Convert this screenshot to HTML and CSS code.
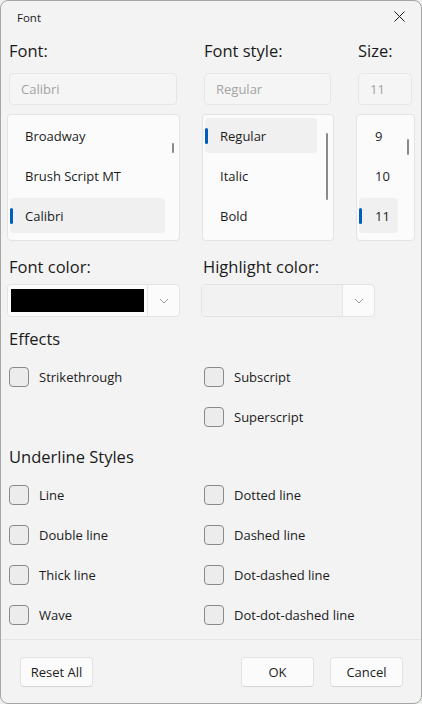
FILE: index.html
```html
<!DOCTYPE html>
<html>
<head>
<meta charset="utf-8">
<link rel="stylesheet" href="styles.css">
</head>
<body>
<div class="window">
  <div class="titlebar">
    <span class="title">Font</span>
    <svg class="close" width="11" height="11" viewBox="0 0 11 11"><path d="M0.5 0.5 L10.5 10.5 M10.5 0.5 L0.5 10.5" stroke="#1a1a1a" stroke-width="1" fill="none"/></svg>
  </div>

  <div class="top-grid">
    <div class="col">
      <div class="label">Font:</div>
      <div class="input">Calibri</div>
      <div class="list">
        <div class="item">Broadway</div>
        <div class="item">Brush Script MT</div>
        <div class="item selected">Calibri</div>
        <div class="scroll scroll-font"></div>
      </div>
    </div>
    <div class="col">
      <div class="label">Font style:</div>
      <div class="input">Regular</div>
      <div class="list">
        <div class="item item-style selected">Regular</div>
        <div class="item item-style">Italic</div>
        <div class="item item-style">Bold</div>
        <div class="scroll scroll-style"></div>
      </div>
    </div>
    <div class="col">
      <div class="label">Size:</div>
      <div class="input">11</div>
      <div class="list">
        <div class="item item-size">9</div>
        <div class="item item-size">10</div>
        <div class="item item-size selected">11</div>
        <div class="scroll scroll-size"></div>
      </div>
    </div>
  </div>

  <div class="color-grid">
    <div class="col">
      <div class="label">Font color:</div>
      <div class="combo">
        <div class="combo-main"><div class="swatch"></div></div>
        <div class="combo-btn"><svg width="10" height="6" viewBox="0 0 10 6"><path d="M1 1 L5 5 L9 1" stroke="#9a9a9a" stroke-width="1" fill="none"/></svg></div>
      </div>
    </div>
    <div class="col">
      <div class="label">Highlight color:</div>
      <div class="combo combo-disabled">
        <div class="combo-main"></div>
        <div class="combo-btn"><svg width="10" height="6" viewBox="0 0 10 6"><path d="M1 1 L5 5 L9 1" stroke="#9a9a9a" stroke-width="1" fill="none"/></svg></div>
      </div>
    </div>
  </div>

  <div class="heading heading-effects">Effects</div>
  <div class="check-grid check-effects">
    <label class="check"><span class="box"></span><span>Strikethrough</span></label>
    <label class="check"><span class="box"></span><span>Subscript</span></label>
    <div></div>
    <label class="check"><span class="box"></span><span>Superscript</span></label>
  </div>

  <div class="heading heading-underline">Underline Styles</div>
  <div class="check-grid check-underline">
    <label class="check"><span class="box"></span><span>Line</span></label>
    <label class="check"><span class="box"></span><span>Dotted line</span></label>
    <label class="check"><span class="box"></span><span>Double line</span></label>
    <label class="check"><span class="box"></span><span>Dashed line</span></label>
    <label class="check"><span class="box"></span><span>Thick line</span></label>
    <label class="check"><span class="box"></span><span>Dot-dashed line</span></label>
    <label class="check"><span class="box"></span><span>Wave</span></label>
    <label class="check"><span class="box"></span><span>Dot-dot-dashed line</span></label>
  </div>

  <div class="spacer"></div>

  <div class="footer">
    <button class="btn">Reset All</button>
    <div class="footer-right">
      <button class="btn">OK</button>
      <button class="btn">Cancel</button>
    </div>
  </div>
</div>
</body>
</html>
```

FILE: styles.css
```css
* { box-sizing: border-box; }
html, body {
  margin: 0;
  padding: 0;
  background: #eef0ee;
}
body {
  font-family: "Open Sans", "Noto Sans", sans-serif;
  color: #1b1b1b;
}
.window {
  width: 422px;
  height: 704px;
  border: 1px solid #a6a6a6;
  border-radius: 8px;
  background: #f3f3f3;
  display: flex;
  flex-direction: column;
  overflow: hidden;
}
.titlebar {
  height: 32px;
  display: flex;
  align-items: center;
  justify-content: space-between;
  padding: 0 16px 0 16px;
}
.title {
  font-size: 11.5px;
  color: #1b1b1b;
}
.close {
  display: block;
  margin-top: -2px;
}
.top-grid {
  display: grid;
  grid-template-columns: 173px 132px 59px;
  column-gap: 22px;
  padding-left: 6px;
  margin-top: 7px;
}
.col {
  display: flex;
  flex-direction: column;
}
.label {
  font-size: 16.5px;
  line-height: 22px;
  height: 22px;
  padding-left: 2px;
  color: #1b1b1b;
  white-space: nowrap;
}
.input {
  margin: 11px 3px 0 2px;
  height: 32px;
  border: 1px solid #e6e6e6;
  border-radius: 4px;
  background: #f5f5f5;
  color: #a3a3a3;
  font-size: 13px;
  line-height: 30px;
  padding-left: 11px;
}
.list {
  position: relative;
  margin-top: 9px;
  height: 127px;
  border: 1px solid #e3e3e3;
  border-radius: 4px;
  background: #fbfbfb;
  padding: 3px 0 0 2px;
  overflow: hidden;
  display: flex;
  flex-direction: column;
  gap: 5px;
}
.item {
  position: relative;
  flex: none;
  height: 35px;
  width: 155px;
  border-radius: 4px;
  font-size: 13px;
  line-height: 35px;
  padding: 1px 0 0 15px;
  color: #1b1b1b;
  white-space: nowrap;
}
.item-style { width: 112px; }
.item-size { width: 39px; padding-left: 16px; }
.item.selected { background: #f0f0f0; }
.item.selected::before {
  content: "";
  position: absolute;
  left: 0;
  top: 10px;
  width: 3px;
  height: 16px;
  border-radius: 2px;
  background: #005fb8;
}
.scroll {
  position: absolute;
  width: 2px;
  border-radius: 1px;
  background: #8a8a8a;
}
.scroll-font { left: 164px; top: 28px; height: 10px; }
.scroll-style { left: 123px; top: 18px; height: 67px; }
.scroll-size { left: 50px; top: 24px; height: 16px; }

.color-grid {
  display: grid;
  grid-template-columns: 173px 174px;
  column-gap: 21px;
  padding-left: 6px;
  margin-top: 15px;
}
.combo {
  margin-top: 6px;
  height: 33px;
  border: 1px solid #e3e3e3;
  border-radius: 4px;
  background: #fbfbfb;
  display: flex;
  overflow: hidden;
}
.combo-main {
  flex: 1;
  padding: 4px 0 4px 3px;
  border-right: 1px solid #e6e6e6;
}
.swatch {
  width: 133px;
  height: 100%;
  background: #000;
}
.combo-btn {
  width: 31px;
  display: flex;
  align-items: center;
  justify-content: center;
}
.combo-btn svg { display: block; margin-top: 1px; }
.combo-disabled .combo-main { background: #f2f2f2; }

.heading {
  font-size: 16.5px;
  line-height: 22px;
  height: 22px;
  padding-left: 8px;
  color: #1b1b1b;
}
.heading-effects { margin-top: 11px; }
.heading-underline { margin-top: 9px; }
.check-grid {
  display: grid;
  grid-template-columns: 195px 1fr;
  grid-auto-rows: 40px;
  padding-left: 8px;
  margin-top: 7px;
}
.check {
  display: flex;
  align-items: center;
  gap: 10px;
  font-size: 13px;
  color: #1b1b1b;
}
.box {
  width: 20px;
  height: 20px;
  border: 1px solid #8a8a8a;
  border-radius: 4px;
  background: #ececec;
  flex: none;
}
.spacer { flex: 1; }
.footer {
  height: 64px;
  border-top: 1px solid #e5e5e5;
  display: flex;
  justify-content: space-between;
  align-items: flex-start;
  padding: 17px 18px 0 19px;
}
.footer-right {
  display: flex;
  gap: 16px;
}
.btn {
  width: 73px;
  height: 30px;
  border: 1px solid #e2e2e2;
  border-bottom-color: #d4d4d4;
  border-radius: 4px;
  background: #fbfbfb;
  font-family: "Open Sans", "Noto Sans", sans-serif;
  font-size: 13px;
  color: #1b1b1b;
  padding: 0;
}
```
